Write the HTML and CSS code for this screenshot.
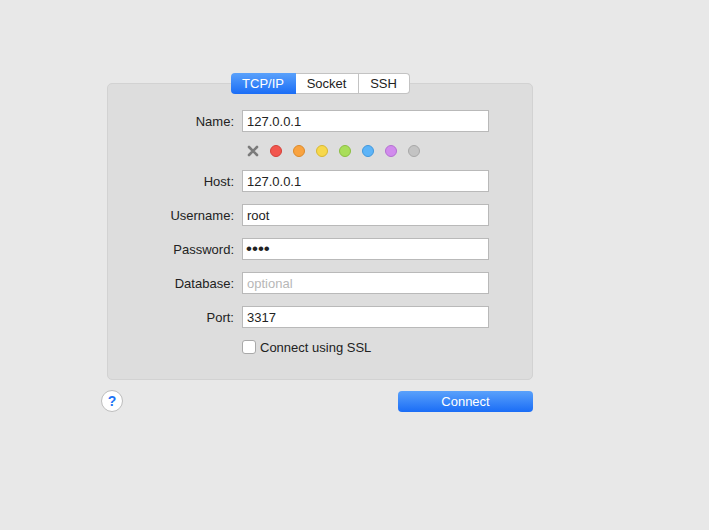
FILE: index.html
```html
<!DOCTYPE html>
<html lang="en">
<head>
    <meta charset="UTF-8">
    <title>Connect</title>
    <link rel="stylesheet" href="styles.css">
</head>
<body>
    <div class="window">
        <div class="panel">
            <div class="tabs">
                <button class="tab active">TCP/IP</button>
                <button class="tab tab-socket">Socket</button>
                <button class="tab tab-ssh">SSH</button>
            </div>

            <form class="fields">
                <label for="name">Name:</label>
                <input type="text" id="name" value="127.0.0.1">

                <span></span>
                <div class="colors">
                    <svg class="clear" width="12" height="12" viewBox="0 0 12 12">
                        <path d="M2 2 L10 10 M10 2 L2 10" stroke="#7b7b7b" stroke-width="2.6" stroke-linecap="round"/>
                    </svg>
                    <span class="dot red"></span>
                    <span class="dot orange"></span>
                    <span class="dot yellow"></span>
                    <span class="dot green"></span>
                    <span class="dot blue"></span>
                    <span class="dot purple"></span>
                    <span class="dot gray"></span>
                </div>

                <label for="host">Host:</label>
                <input type="text" id="host" value="127.0.0.1">

                <label for="username">Username:</label>
                <input type="text" id="username" value="root">

                <label for="password">Password:</label>
                <input type="password" id="password" value="root">

                <label for="database">Database:</label>
                <input type="text" id="database" placeholder="optional">

                <label for="port">Port:</label>
                <input type="text" id="port" value="3317">

                <span></span>
                <label class="check"><input type="checkbox"> Connect using SSL</label>
            </form>
        </div>

        <div class="footer">
            <button class="help">?</button>
            <button class="connect">Connect</button>
        </div>
    </div>
</body>
</html>
```

FILE: styles.css
```css
/* styles.css */
body {
    margin: 0;
    background-color: #e8e8e8;
    font-family: "Liberation Sans", Arial, sans-serif;
    font-size: 13px;
    color: #222;
}

.window {
    width: 426px;
    padding: 73px 0 0 107px;
}

.panel {
    margin-top: 10px;
    background-color: #dddddd;
    border: 1px solid #d2d2d2;
    border-radius: 5px;
    padding-bottom: 25px;
    box-sizing: border-box;
}

.tabs {
    display: flex;
    justify-content: center;
    margin-top: -11px;
}

.tab {
    height: 21px;
    padding: 0;
    border: 1px solid #c3c3c3;
    border-left: none;
    background-color: #fff;
    font-family: inherit;
    font-size: 13px;
    color: #222;
    width: 63px;
}

.tab.active {
    width: 65px;
    border: none;
    border-radius: 4px 0 0 4px;
    color: #fff;
    background: linear-gradient(#5aa1fb, #1a6df6);
}

.tab-ssh {
    width: 51px;
    border-radius: 0 4px 4px 0;
}

.fields {
    display: grid;
    grid-template-columns: 126px 247px;
    column-gap: 8px;
    row-gap: 12px;
    align-items: center;
    margin-top: 16px;
}

.fields > label {
    text-align: right;
}

.fields input[type="text"],
.fields input[type="password"] {
    height: 22px;
    box-sizing: border-box;
    border: 1px solid #b9b9b9;
    background: #fff;
    padding: 0 4px;
    font-family: inherit;
    font-size: 13px;
    color: #222;
    outline: none;
}

.fields input[type="password"] {
    font-size: 17px;
    letter-spacing: 0;
    padding-left: 3px;
}

.fields input::placeholder {
    color: #b7b7b7;
}

.colors {
    display: flex;
    align-items: center;
    gap: 11px;
    height: 14px;
    padding-left: 5px;
}

.dot {
    width: 12px;
    height: 12px;
    border-radius: 50%;
    box-sizing: border-box;
}

.red { background: #f2564e; border: 1px solid #d44038; }
.orange { background: #f9a340; border: 1px solid #dc8a2a; }
.yellow { background: #f7d84c; border: 1px solid #d8b832; }
.green { background: #a9de5a; border: 1px solid #8cbf42; }
.blue { background: #5db4f8; border: 1px solid #4198dc; }
.purple { background: #d18bed; border: 1px solid #b471d1; }
.gray { background: #c3c3c3; border: 1px solid #a8a8a8; }

.check {
    display: flex;
    align-items: center;
    gap: 4px;
    height: 14px;
}

.check input {
    appearance: none;
    margin: 0;
    width: 14px;
    height: 14px;
    border: 1px solid #a9a9a9;
    border-radius: 3px;
    background: #fff;
}

.footer {
    display: flex;
    justify-content: space-between;
    align-items: center;
    margin-top: 10px;
}

.help {
    width: 22px;
    height: 22px;
    margin-left: -6px;
    border-radius: 50%;
    border: 1px solid #bdbdbd;
    background: #fff;
    color: #1e74f5;
    font-family: inherit;
    font-size: 14px;
    font-weight: bold;
    padding: 0;
}

.connect {
    width: 135px;
    height: 21px;
    border: none;
    border-radius: 4px;
    background: linear-gradient(#5aa1fb, #1a6df6);
    color: #fff;
    font-family: inherit;
    font-size: 13px;
    padding: 0;
}
```
